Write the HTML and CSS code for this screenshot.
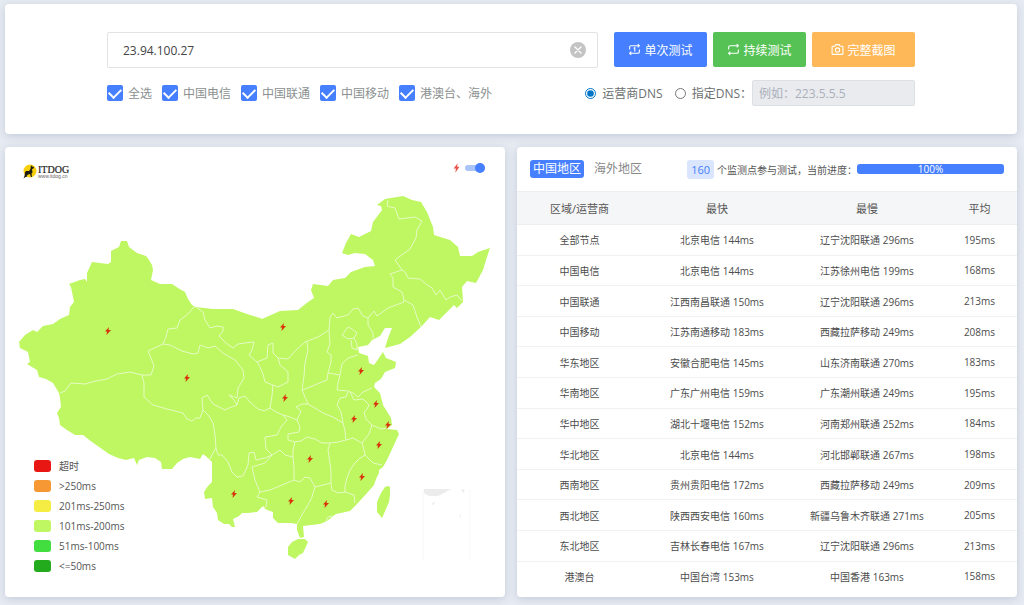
FILE: index.html
```html
<!DOCTYPE html>
<html lang="zh-CN">

<head>
    <meta charset="UTF-8">
    <meta name="viewport" content="width=device-width, initial-scale=1.0">
    <title>ITDOG Ping</title>
    <link rel="stylesheet" href="styles.css">
</head>

<body>
    <form class="card search-card">
        <div class="search-row">
            <div class="host-box">
                <input type="text" id="host" class="host-input" value="23.94.100.27" aria-label="Host">
                <button type="button" class="clear-btn" aria-label="清除">
                    <svg viewBox="0 0 16 16" width="16" height="16"><circle cx="8" cy="8" r="8" fill="#c4c4c4"/><path d="M5 5l6 6M11 5l-6 6" stroke="#fff" stroke-width="1.4" stroke-linecap="round"/></svg>
                </button>
            </div>
            <div class="buttons">
                <button type="button" class="btn btn-blue">
                    <svg class="icon" viewBox="0 0 24 24"><path d="M3 12V8a3 3 0 0 1 3-3h15M18 2l3 3-3 3M21 12v4a3 3 0 0 1-3 3H3M6 22l-3-3 3-3M10.500 10l2-1.500V15.500"/></svg>
                    单次测试
                </button>
                <button type="button" class="btn btn-green">
                    <svg class="icon" viewBox="0 0 24 24"><path d="M3 12V8a3 3 0 0 1 3-3h15M18 2l3 3-3 3M21 12v4a3 3 0 0 1-3 3H3M6 22l-3-3 3-3"/></svg>
                    持续测试
                </button>
                <button type="button" class="btn btn-orange">
                    <svg class="icon" viewBox="0 0 24 24"><path d="M3 6h4l2-3h6l2 3h4a1 1 0 0 1 1 1v13a1 1 0 0 1-1 1H3a1 1 0 0 1-1-1V7a1 1 0 0 1 1-1z"/><circle cx="12" cy="13" r="4"/></svg>
                    完整截图
                </button>
            </div>
        </div>
        <div class="option-row">
            <div class="checks">
                <label><input type="checkbox" checked>全选</label>
                <label><input type="checkbox" checked>中国电信</label>
                <label><input type="checkbox" checked>中国联通</label>
                <label><input type="checkbox" checked>中国移动</label>
                <label><input type="checkbox" checked>港澳台、海外</label>
            </div>
            <div class="dns">
                <label><input type="radio" name="dns" checked>运营商DNS</label>
                <label><input type="radio" name="dns">指定DNS：</label>
                <input type="text" class="dns-input" placeholder="例如：223.5.5.5" aria-label="指定DNS" disabled>
            </div>
        </div>
    </form>

    <div class="panels">
        <section class="card map-card">
            <svg class="map" viewBox="5 147 500 450" role="img" aria-label="中国地图">
                <defs>
                    <symbol id="bolt" viewBox="0 0 12 16"><path d="M8 0L0 9h4l-1 7 9-10H7z"/></symbol>
                </defs>
                <g class="land">
                    <!-- mainland -->
                    <path d="M19 342L25 335L33 330L37 332L43 326L53 324L60 319L69 315L70 307L74 302L71 287L69 284L80 280L85 279L87 282L87 273L92 262L100 263L108 264L111 262L111 251L119 247L121 241L127 241L129 247L137 253L146 256L149 260L152 265L153 270L151 280L160 284L172 284L178 288L185 292L188 299L192 305L195 307L213 309L233 309L247 314L260 318L262 319L280 311L298 310L308 302L314 298L311 290L313 284L328 286L333 280L345 278L351 272L365 267L375 266L373 260L365 254L355 253L348 255L342 253L346 243L351 234L359 237L371 231L373 222L382 210L381 206L377 205L385 199L403 196L412 200L421 202L427 212L433 227L434 235L450 240L458 247L460 256L472 256L478 252L490 248L487 257L483 270L476 283L467 281L462 287L463 302L457 308L454 305L445 314L439 320L430 317L421 327L410 337L400 344L385 348L388 338L392 328L385 328L380 336L372 340L368 345L358 347L359 353L368 356L369 363L374 365L379 358L383 352L386 358L396 362L395 368L385 372L381 379L375 383L374 387L380 393L383 405L391 418L392 425L387 429L397 430L399 434L393 447L387 460L383 467L379 470L379 473L376 479L374 485L367 493L357 504L350 511L336 514L327 521L320 524L303 526L304 537L300 538L297 530L297 524L291 523L278 523L273 518L273 512L265 509L263 506L257 512L248 513L242 513L239 516L233 519L235 527L232 527L229 524L224 524L218 520L217 513L213 507L212 498L205 499L204 492L208 486L212 482L212 462L208 458L203 454L200 459L190 457L183 459L177 463L172 469L162 469L161 462L155 458L147 457L139 460L137 465L134 458L126 460L118 458L109 454L102 449L92 442L83 435L75 435L67 430L60 425L59 418L57 413L61 407L60 398L59 393L53 383L46 379L39 377L37 370L27 364L30 362L28 352L20 348z"/>
                    <!-- hainan, taiwan -->
                    <path d="M292 542L298 539L305 539L308 542L303 553L299 555L295 559L288 555L288 547z"/>
                    <path d="M385 487L388 486L390 487L390 495L389 502L386 509L382 518L377 512L377 502L381 493z"/>
                </g>
                <g class="border">
                    <path d="M195 307L193 308L187 315L180 320L177 328L168 329L166 337L163 344L148 351L151 358L154 366L151 375L142 375L130 372L117 374L107 379L96 381L85 384L71 383L65 391L60 393"/>
                    <path d="M142 375L144 383L144 397L153 405L167 409L175 411L183 413L187 419L192 421L196 418L200 418L203 410L202 398L207 395L213 404L225 410L229 408L237 405L234 400L229 395L237 398L238 388L244 378L243 370L235 360L223 353L215 346L208 348L200 345L198 353L193 354L182 351L170 345L163 344"/>
                    <path d="M203 410L209 416L213 423L215 435L216 448L213 453L210 459M216 448L218 455L222 455L228 462L232 472L237 477L243 476L248 465L249 453L254 452L256 460L265 458L272 455L266 449L265 437L277 435L281 427L287 420L283 415"/>
                    <path d="M197 308L203 312L205 320L210 328L217 326L223 327L223 331L219 336L226 343L233 348L238 344L245 343L254 342L252 350L249 355L257 362L267 358L268 345L273 343L273 353L278 358L288 359L296 350L305 342L318 337L329 330L330 317L333 313L337 318L348 315L353 309L358 308L363 316L368 318L374 311L377 316L388 308L404 302L404 300L402 292L393 287L393 278L390 274L402 270L395 260L403 254L410 249L416 238L417 230L422 221L415 217L399 219L395 208L387 206L388 200"/>
                    <path d="M402 270L405 272L408 278L420 279L426 284L432 288L436 295L440 290L446 300L450 297L457 295L462 301M404 300L413 305L415 311L417 317L421 327M368 318L368 325L373 333L373 338"/>
                    <path d="M257 362L260 367L263 374L265 382L273 385L278 387L288 382L288 372L280 365L278 358M273 385L272 396L270 408L264 411L258 409L250 402L245 396L239 398L237 405M270 408L276 412L283 415L290 417L297 420L301 411L296 407L302 404L308 404L305 397L302 390L304 376L305 363L308 350L307 342"/>
                    <path d="M302 390L310 387L317 384L327 380L328 373L331 362L331 355L327 352L330 344L329 330M328 373L340 375L342 364L348 358L358 355M340 375L338 383L337 390L348 391L353 393L358 397L363 392L372 388"/>
                    <path d="M348 392L346 397L340 398L337 405L341 412L343 423L333 417L325 414L308 404M343 423L345 431L346 440L338 442L330 443L322 443L315 439L307 437L301 441L295 442L288 440L288 434L299 432L300 427L297 420"/>
                    <path d="M350 392L354 400L363 399L369 405L367 409L364 412L366 419L372 425L381 429L388 428M372 425L369 434L365 439L362 443L353 438L346 440M362 443L364 450L365 455L373 463L382 465M365 455L359 459L355 463L350 470L347 478L345 486L345 492L354 495L355 503"/>
                    <path d="M272 455L280 450L285 455L293 457L294 468L294 480L282 485L270 490L260 492L255 480L252 467L265 463L272 455M295 442L293 450L293 457M330 443L328 450L329 457L331 470L331 483L323 485L315 487L310 478L305 477L300 482L294 480M331 483L332 490L338 493L345 492M315 487L312 497L308 505L303 513L297 524M260 492L257 497L267 500L266 507L264 508"/>
                    <path d="M342 335L348 327L352 329L357 333L354 338L348 339zM354 338L357 344L357 350L352 348L351 340M326 521L328 517L333 516"/>
                </g>
                <g class="inset">
                    <path d="M424 489H451L444 493L438 496H429L424 493zM461 489L465 490L463 493zM431 504L436 501L433 505zM461 513V516L459 518zM460 524V527"/>
                    <path d="M423 490V560M470 490V560" class="inset-frame"/>
                </g>
                <g class="bolts">
                    <use href="#bolt" x="105" y="327" width="6" height="8"/>
                    <use href="#bolt" x="184" y="374" width="6" height="8"/>
                    <use href="#bolt" x="280" y="323" width="6" height="8"/>
                    <use href="#bolt" x="282" y="394" width="6" height="8"/>
                    <use href="#bolt" x="358" y="367" width="6" height="8"/>
                    <use href="#bolt" x="373" y="400" width="6" height="8"/>
                    <use href="#bolt" x="351" y="415" width="6" height="8"/>
                    <use href="#bolt" x="385" y="421" width="6" height="8"/>
                    <use href="#bolt" x="376" y="441" width="6" height="8"/>
                    <use href="#bolt" x="307" y="455" width="6" height="8"/>
                    <use href="#bolt" x="359" y="473" width="6" height="8"/>
                    <use href="#bolt" x="231" y="490" width="6" height="8"/>
                    <use href="#bolt" x="288" y="497" width="6" height="8"/>
                    <use href="#bolt" x="323" y="500" width="6" height="8"/>
                </g>
            </svg>

            <div class="map-head">
                <svg class="logo" viewBox="0 0 48 16" width="48" height="16" role="img" aria-label="ITDOG">
                    <circle cx="7" cy="8" r="6.500" fill="#f7cf0a"/>
                    <path d="M8 2l1 1.500 2 .5-.5 1.500-1.500.5.5 3.500-1 1 .5 3.500H8l-1-3-2 .5L3.500 13 4 14H2.500L.5 15.500 1.500 13 2 9.500 3 8h3l1.500-2z" fill="#1d1a10"/>
                    <text x="15" y="10" class="logo-name">ITDOG</text>
                    <text x="15" y="15" class="logo-url">www.itdog.cn</text>
                </svg>
                <label class="toggle">
                    <svg viewBox="0 0 12 16" width="7" height="10"><path d="M8 0L1 9h4l-1 7 7-10H7z" fill="#e8544a"/></svg>
                    <input type="checkbox" role="switch" aria-label="闪电" checked>
                </label>
            </div>

            <ul class="legend">
                <li><span class="swatch red"></span>超时</li>
                <li><span class="swatch orange"></span>&gt;250ms</li>
                <li><span class="swatch yellow"></span>201ms-250ms</li>
                <li><span class="swatch lime"></span>101ms-200ms</li>
                <li><span class="swatch green"></span>51ms-100ms</li>
                <li><span class="swatch dark"></span>&lt;=50ms</li>
            </ul>
        </section>

        <section class="card result-card">
            <div class="result-head">
                <button type="button" class="tab active">中国地区</button>
                <button type="button" class="tab">海外地区</button>
                <div class="progress-info">
                    <span class="count">160</span>
                    <span>个监测点参与测试，当前进度：</span>
                </div>
                <div class="progress" role="progressbar" aria-valuenow="100" aria-valuemin="0" aria-valuemax="100">
                    <div class="progress-bar" style="width: 100%">100%</div>
                </div>
            </div>
            <table>
                <thead>
                    <tr><th class="col-area">区域/运营商</th><th class="col-node">最快</th><th class="col-node">最慢</th><th class="col-avg">平均</th></tr>
                </thead>
                <tbody>
                    <tr><td>全部节点</td><td>北京电信 144ms</td><td>辽宁沈阳联通 296ms</td><td>195ms</td></tr>
                    <tr><td>中国电信</td><td>北京电信 144ms</td><td>江苏徐州电信 199ms</td><td>168ms</td></tr>
                    <tr><td>中国联通</td><td>江西南昌联通 150ms</td><td>辽宁沈阳联通 296ms</td><td>213ms</td></tr>
                    <tr><td>中国移动</td><td>江苏南通移动 183ms</td><td>西藏拉萨移动 249ms</td><td>208ms</td></tr>
                    <tr><td>华东地区</td><td>安徽合肥电信 145ms</td><td>山东济南联通 270ms</td><td>183ms</td></tr>
                    <tr><td>华南地区</td><td>广东广州电信 159ms</td><td>广东潮州联通 249ms</td><td>195ms</td></tr>
                    <tr><td>华中地区</td><td>湖北十堰电信 152ms</td><td>河南郑州联通 252ms</td><td>184ms</td></tr>
                    <tr><td>华北地区</td><td>北京电信 144ms</td><td>河北邯郸联通 267ms</td><td>198ms</td></tr>
                    <tr><td>西南地区</td><td>贵州贵阳电信 172ms</td><td>西藏拉萨移动 249ms</td><td>209ms</td></tr>
                    <tr><td>西北地区</td><td>陕西西安电信 160ms</td><td>新疆乌鲁木齐联通 271ms</td><td>205ms</td></tr>
                    <tr><td>东北地区</td><td>吉林长春电信 167ms</td><td>辽宁沈阳联通 296ms</td><td>213ms</td></tr>
                    <tr><td>港澳台</td><td>中国台湾 153ms</td><td>中国香港 163ms</td><td>158ms</td></tr>
                </tbody>
            </table>
        </section>
    </div>
</body>

</html>
```

FILE: styles.css
```css
* {
    margin: 0;
    padding: 0;
    box-sizing: border-box;
}

body {
    font-family: "Open Sans", "Noto Sans CJK SC", sans-serif;
    font-size: 12px;
    color: #555;
    background-color: #e7ebf2;
    padding: 4px 7px 8px 5px;
}

input,
button {
    font-family: inherit;
}

button {
    cursor: pointer;
    border: none;
}

.card {
    background-color: #fff;
    border-radius: 4px;
    box-shadow: 0 2px 8px rgba(90, 110, 150, 0.25);
}

/* Search form */
.search-card {
    padding: 28px 102px;
    margin-bottom: 13px;
}

.search-row {
    display: flex;
    gap: 16px;
}

.host-box {
    flex: 1;
    display: flex;
    align-items: center;
    height: 36px;
    padding: 0 11px 0 15px;
    border: 1px solid #e2e3e6;
    border-radius: 2px;
}

.host-input {
    flex: 1;
    min-width: 0;
    border: none;
    outline: none;
    font-size: 12px;
    color: #444;
}

.clear-btn {
    display: flex;
    background: none;
}

.buttons {
    display: flex;
    gap: 6px;
}

.btn {
    display: flex;
    align-items: center;
    justify-content: center;
    gap: 3px;
    width: 93px;
    height: 35px;
    border-radius: 2px;
    font-size: 12px;
    color: #fff;
}

.btn-blue {
    background-color: #467fff;
}

.btn-green {
    background-color: #56c255;
}

.btn-orange {
    width: 103px;
    background-color: #ffb857;
}

.icon {
    width: 13px;
    height: 13px;
    fill: none;
    stroke: #fff;
    stroke-width: 2;
}

.option-row {
    display: flex;
    justify-content: space-between;
    align-items: center;
    margin-top: 12px;
}

.option-row label {
    display: flex;
    align-items: center;
    white-space: nowrap;
}

.checks {
    display: flex;
    gap: 10px;
    color: #8b9090;
}

.checks label {
    gap: 5px;
}

.checks input {
    appearance: none;
    display: grid;
    place-items: center;
    width: 16px;
    height: 16px;
    border-radius: 2px;
    background-color: #467fff;
}

.checks input:checked::after {
    content: "";
    width: 10px;
    height: 6px;
    border-left: 2px solid #fff;
    border-bottom: 2px solid #fff;
    transform: translateY(-1px) rotate(-45deg);
}

.dns {
    display: flex;
    align-items: center;
    color: #6c7070;
}

.dns label {
    gap: 6px;
    margin-right: 12px;
}

.dns label + label {
    margin-right: 0;
}

.dns input[type="radio"] {
    width: 11px;
    height: 11px;
    accent-color: #0075c8;
}

.dns-input {
    width: 163px;
    height: 26px;
    padding: 0 6px;
    border: 1px solid #dcdfe4;
    border-radius: 2px;
    background-color: #e9ebef;
    font-size: 12px;
}

.dns-input::placeholder {
    color: #a9b0ba;
}

/* Panels */
.panels {
    display: grid;
    grid-template-columns: 1fr 1fr;
    gap: 12px;
}

/* map, logo and legend share one grid cell */
.map-card {
    display: grid;
}

.map-card > * {
    grid-area: 1 / 1;
}

.map {
    width: 100%;
}

.land {
    fill: #bef761;
}

.border {
    fill: none;
    stroke: #e6fbc4;
    stroke-width: 1;
    stroke-linejoin: round;
}

.inset {
    fill: #ececec;
}

.inset-frame {
    stroke: #f7f7f7;
}

.bolts {
    fill: #d8330c;
}

.map-head {
    display: flex;
    justify-content: space-between;
    align-self: start;
    padding: 16px 20px 0 18px;
}

.logo-name {
    font: 10px "Liberation Serif", serif;
    fill: #222;
    stroke: #222;
    stroke-width: 0.2;
}

.logo-url {
    font: 5px "Liberation Sans", sans-serif;
    fill: #666;
}

.toggle {
    display: flex;
    align-items: center;
    gap: 5px;
    height: 10px;
}

.toggle input {
    appearance: none;
    display: flex;
    align-items: center;
    justify-content: flex-end;
    width: 20px;
    height: 6px;
    border-radius: 3px;
    background-color: #a9c4f6;
}

.toggle input::after {
    content: "";
    width: 10px;
    height: 10px;
    border-radius: 50%;
    background-color: #467fff;
}

.legend {
    align-self: end;
    justify-self: start;
    list-style: none;
    padding: 0 0 21px 29px;
    font-size: 10px;
    line-height: 20px;
}

.legend li {
    display: flex;
    align-items: center;
    gap: 8px;
}

.swatch {
    width: 17px;
    height: 12px;
    border-radius: 3px;
}

.red {
    background-color: #e81713;
}

.orange {
    background-color: #f69833;
}

.yellow {
    background-color: #f6ed44;
}

.lime {
    background-color: #bef761;
}

.green {
    background-color: #42dd3f;
}

.dark {
    background-color: #24aa1d;
}

/* Results */
.result-head {
    display: flex;
    align-items: center;
    height: 44px;
    padding: 0 13px;
    font-size: 10px;
}

.tab {
    height: 18px;
    padding: 0 3px;
    border-radius: 3px;
    background: none;
    font-size: 12px;
    line-height: 18px;
    color: #888;
    white-space: nowrap;
}

.tab + .tab {
    margin-left: 7px;
}

.tab.active {
    background-color: #467fff;
    color: #fff;
}

.progress-info {
    display: flex;
    align-items: center;
    gap: 3px;
    margin-left: auto;
    white-space: nowrap;
}

.count {
    padding: 0 4px;
    border-radius: 3px;
    background-color: #dae6ff;
    font-size: 11px;
    line-height: 19px;
    color: #467fff;
}

.progress {
    width: 147px;
    border-radius: 3px;
    background-color: #e9ecef;
}

.progress-bar {
    height: 10px;
    border-radius: 3px;
    background-color: #467fff;
    font-size: 10px;
    line-height: 10px;
    text-align: center;
    color: #fff;
}

table {
    width: 100%;
    height: 400px;
    table-layout: fixed;
    border-collapse: collapse;
    text-align: center;
}

th {
    height: 33px;
    background-color: #f5f6f7;
    border-top: 1px solid #eceeef;
    border-bottom: 1px solid #eceeef;
    font-size: 11px;
    font-weight: normal;
}

td {
    border-bottom: 1px solid #f0f1f2;
    font-size: 10px;
    color: #4c4c4c;
}

tr:last-child td {
    border-bottom: none;
}

.col-area {
    width: 25%;
}

.col-node {
    width: 30%;
}

.col-avg {
    width: 15%;
}
```
